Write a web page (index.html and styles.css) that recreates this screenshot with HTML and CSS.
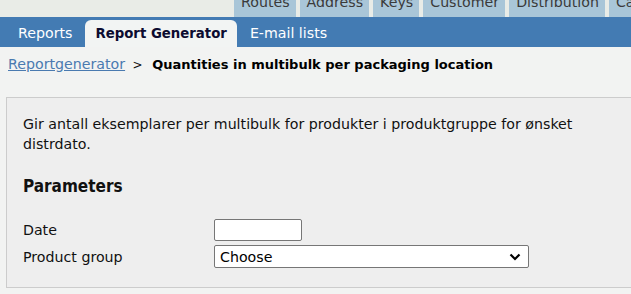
FILE: index.html
```html
<!DOCTYPE html>
<html lang="en">
<head>
    <meta charset="UTF-8">
    <title>Report Generator</title>
    <link rel="stylesheet" href="styles.css">
</head>
<body>
    <div class="topnav">
        <a class="toptab">Routes</a>
        <a class="toptab">Address</a>
        <a class="toptab">Keys</a>
        <a class="toptab">Customer</a>
        <a class="toptab">Distribution</a>
        <a class="toptab">Campaigns</a>
    </div>
    <div class="mainnav">
        <a class="tab">Reports</a>
        <a class="tab active">Report Generator</a>
        <a class="tab">E-mail lists</a>
    </div>
    <div class="breadcrumb">
        <a href="#" class="crumb">Reportgenerator</a>
        <span class="sep">&gt;</span>
        <span class="current">Quantities in multibulk per packaging location</span>
    </div>
    <div class="panel">
        <p class="intro">Gir antall eksemplarer per multibulk for produkter i produktgruppe for ønsket distrdato.</p>
        <h2 class="heading">Parameters</h2>
        <div class="params">
            <label class="label">Date</label>
            <input type="text" class="date">
            <label class="label">Product group</label>
            <div class="select">
                <span>Choose</span>
                <svg width="12" height="8" viewBox="0 0 12 8"><path d="M1.5 1.5 L6 6 L10.5 1.5" fill="none" stroke="#000" stroke-width="2.2"/></svg>
            </div>
        </div>
    </div>
</body>
</html>
```

FILE: styles.css
```css
body {
    font-family: 'DejaVu Sans', sans-serif;
    font-size: 14.2px;
    background-color: #f2f3f2;
    margin: 0;
    overflow: hidden;
    color: #111;
}
.topnav {
    height: 17px;
    overflow: hidden;
    display: flex;
    align-items: flex-end;
    padding-left: 234px;
    gap: 4px;
    background-color: #e9ece7;
}
.toptab {
    flex: none;
    height: 30px;
    line-height: 31px;
    padding: 0 6px 0 7px;
    background-color: #a9c6d8;
    color: #3a3a3a;
    box-sizing: border-box;
}
.mainnav {
    height: 30px;
    background-color: #437bb3;
    display: flex;
    align-items: flex-end;
    padding-left: 8px;
    gap: 3px;
}
.tab {
    height: 27px;
    line-height: 27px;
    padding: 0 10px;
    color: #fff;
}
.tab.active {
    background-color: #f2f4f3;
    color: #0c0c30;
    font-weight: bold;
    font-size: 13.3px;
    border-radius: 6px 6px 0 0;
}
.breadcrumb {
    padding: 8px 8px;
    height: 18px;
    line-height: 18px;
}
.crumb {
    color: #4a7ab0;
}
.sep {
    margin: 0 5px 0 3px;
    font-size: 12px;
}
.current {
    font-weight: bold;
    font-size: 13px;
    color: #000;
}
.panel {
    margin: 16px -10px 0 6px;
    height: 189px;
    border: 1px solid #cccccc;
    background-color: #eeeeee;
    padding: 0 16px;
}
.intro {
    margin: 16px 0 0;
    width: 580px;
    line-height: 20px;
}
.heading {
    font-family: 'DejaVu Sans Condensed', 'DejaVu Sans', sans-serif;
    font-size: 17px;
    margin: 22px 0 23px;
}
.params {
    display: grid;
    grid-template-columns: 191px auto;
    row-gap: 4px;
    align-items: center;
}
.date {
    width: 88px;
    height: 22px;
    box-sizing: border-box;
    border: 1px solid #767676;
    border-radius: 2px;
    margin: 0;
}
.select {
    width: 315px;
    height: 23px;
    box-sizing: border-box;
    border: 1px solid #767676;
    border-radius: 2px;
    background-color: #fff;
    display: flex;
    align-items: center;
    justify-content: space-between;
    padding: 0 7px 0 5px;
    color: #000;
}
```
